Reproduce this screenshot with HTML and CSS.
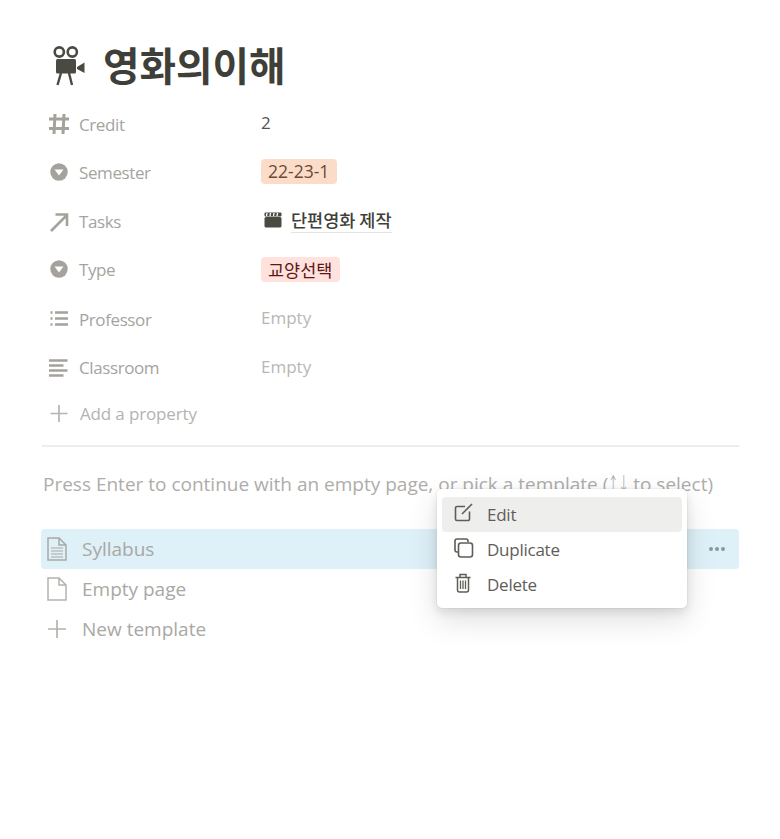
FILE: index.html
```html
<!DOCTYPE html>
<html lang="en">
<head>
    <meta charset="UTF-8">
    <meta name="viewport" content="width=device-width, initial-scale=1.0">
    <title>영화의이해</title>
    <link rel="stylesheet" href="styles.css">
</head>
<body>

<div class="page">
    <div class="title">
        <svg class="title-icon" viewBox="0 0 36 42" width="36" height="42">
            <circle cx="9.300" cy="8" r="4.600" fill="none" stroke="#4a4a43" stroke-width="2.600"/>
            <circle cx="22.300" cy="8" r="4.600" fill="none" stroke="#4a4a43" stroke-width="2.600"/>
            <rect x="6" y="15" width="20" height="14.500" rx="1.500" fill="#4a4a43"/>
            <path d="M27 23 L34.500 18.500 V29 L27 25 Z" fill="#4a4a43"/>
            <path d="M11 29 L7.500 41 M19 29 L22 41" stroke="#4a4a43" stroke-width="2.400" fill="none"/>
        </svg>
        <h1>영화의이해</h1>
    </div>

    <div class="props">
        <div class="prop">
            <div class="prop-name">
                <svg class="prop-icon" viewBox="0 0 20 20"><path d="M6 0 L5 20 M15 0 L14 20 M0 5 H20 M0 14.500 H20" stroke="#a5a29c" stroke-width="3" fill="none"/></svg>
                <span>Credit</span>
            </div>
            <div class="prop-value">2</div>
        </div>
        <div class="prop select-row">
            <div class="prop-name">
                <svg class="prop-icon" viewBox="0 0 20 20"><circle cx="10" cy="10" r="8.700" fill="#a5a29c"/><path d="M5.500 7.500 H14.500 L10 13.500 Z" fill="#fff"/></svg>
                <span>Semester</span>
            </div>
            <div class="prop-value"><span class="tag tag-orange">22-23-1</span></div>
        </div>
        <div class="prop">
            <div class="prop-name">
                <svg class="prop-icon" viewBox="0 0 20 20"><path d="M2 19 L17.500 3.500 M6.500 2.500 H18 V14" stroke="#a5a29c" stroke-width="2.600" fill="none"/></svg>
                <span>Tasks</span>
            </div>
            <div class="prop-value">
                <span class="task">
                    <svg class="task-icon" viewBox="0 0 18 16" width="18" height="16">
                        <rect x="0.500" y="5" width="17" height="10.500" rx="1.500" fill="#4a4a43"/>
                        <rect x="0.500" y="0.500" width="17" height="4" rx="1" fill="#4a4a43"/>
                        <path d="M3 1 L2.500 4 M6.500 1 L6 4 M10 1 L9.500 4 M13.500 1 L13 4" stroke="#fff" stroke-width="1.300"/>
                    </svg>
                    <span class="task-link">단편영화 제작</span>
                </span>
            </div>
        </div>
        <div class="prop select-row">
            <div class="prop-name">
                <svg class="prop-icon" viewBox="0 0 20 20"><circle cx="10" cy="10" r="8.700" fill="#a5a29c"/><path d="M5.500 7.500 H14.500 L10 13.500 Z" fill="#fff"/></svg>
                <span>Type</span>
            </div>
            <div class="prop-value"><span class="tag tag-red">교양선택</span></div>
        </div>
        <div class="prop">
            <div class="prop-name">
                <svg class="prop-icon" viewBox="0 0 20 20"><path d="M6 3.500 H19 M6 9.500 H19 M6 15.500 H19" stroke="#a5a29c" stroke-width="2.500"/><path d="M1.500 3.500 H3.500 M1.500 9.500 H3.500 M1.500 15.500 H3.500" stroke="#a5a29c" stroke-width="2.500"/></svg>
                <span>Professor</span>
            </div>
            <div class="prop-value empty">Empty</div>
        </div>
        <div class="prop">
            <div class="prop-name">
                <svg class="prop-icon" viewBox="0 0 20 20"><path d="M0 2.500 H18.500 M0 7.500 H14.500 M0 12.500 H18.500 M0 17.500 H14.500" stroke="#a5a29c" stroke-width="2.500"/></svg>
                <span>Classroom</span>
            </div>
            <div class="prop-value empty">Empty</div>
        </div>
        <div class="prop add-prop">
            <svg class="prop-icon" viewBox="0 0 20 20"><path d="M10 2 V19 M1.500 10.500 H18.500" stroke="#b5b3af" stroke-width="1.700"/></svg>
            <span>Add a property</span>
        </div>
    </div>

    <div class="divider"></div>

    <p class="hint">Press Enter to continue with an empty page, or pick a template (<span class="arrows"><span>↑↓</span></span> to select)</p>

    <div class="templates">
        <div class="template active">
            <svg class="template-icon" viewBox="0 0 20 24"><path d="M1 1 H12 L19 8 V23 H1 Z M12 1 V8 H19" stroke="#a9a8a4" stroke-width="1.500" fill="none"/><path d="M4 11 H16 M4 14 H16 M4 17 H16 M4 20 H16" stroke="#a9a8a4" stroke-width="1.200"/></svg>
            <span>Syllabus</span>
            <span class="dots"><i></i><i></i><i></i></span>
        </div>
        <div class="template">
            <svg class="template-icon" viewBox="0 0 20 24"><path d="M1 1 H12 L19 8 V23 H1 Z M12 1 V8 H19" stroke="#b5b3af" stroke-width="1.500" fill="none"/></svg>
            <span>Empty page</span>
        </div>
        <div class="template">
            <svg class="template-icon" viewBox="0 0 20 24"><path d="M10 3 V21 M1 12 H19" stroke="#b5b3af" stroke-width="1.700"/></svg>
            <span>New template</span>
        </div>
    </div>
</div>

<div class="menu">
    <div class="menu-item selected">
        <svg class="menu-icon" viewBox="0 0 20 20"><path d="M11 3.500 H3 A1.500 1.500 0 0 0 1.500 5 V16 A1.500 1.500 0 0 0 3 17.500 H14 A1.500 1.500 0 0 0 15.500 16 V8.500" stroke="#5f5d58" stroke-width="1.600" fill="none"/><path d="M8 11 L18 1" stroke="#5f5d58" stroke-width="1.600"/></svg>
        <span>Edit</span>
    </div>
    <div class="menu-item">
        <svg class="menu-icon" viewBox="0 0 20 20"><path d="M4 14 H3 A2 2 0 0 1 1 12 V3 A2 2 0 0 1 3 1 H12 A2 2 0 0 1 14 3 V4" stroke="#5f5d58" stroke-width="1.600" fill="none"/><rect x="4.500" y="5" width="14" height="14" rx="2.500" stroke="#5f5d58" stroke-width="1.600" fill="none"/></svg>
        <span>Duplicate</span>
    </div>
    <div class="menu-item">
        <svg class="menu-icon" viewBox="0 0 20 20"><path d="M1.500 4.500 H16.500 M6 4 V1.500 H12 V4 M3.500 5 V17 A2 2 0 0 0 5.500 19 H12.500 A2 2 0 0 0 14.500 17 V5" stroke="#5f5d58" stroke-width="1.500" fill="none"/><path d="M6.500 7.500 V16 M9 7.500 V16 M11.500 7.500 V16" stroke="#5f5d58" stroke-width="1.300"/></svg>
        <span>Delete</span>
    </div>
</div>

</body>
</html>
```

FILE: styles.css
```css
/* Basic page setup */
body {
    margin: 0;
    background: #fff;
    font-family: "Open Sans", "Noto Sans CJK KR", sans-serif;
}

.page {
    padding: 27px 41px 0 41px;
}

/* Title */
.title {
    display: flex;
    align-items: center;
    height: 73px;
    padding-left: 9px;
}

.title-icon {
    flex: none;
    margin-top: 2px;
    margin-right: 17px;
}

.title h1 {
    margin: 0;
    font-family: "Noto Sans CJK KR", sans-serif;
    font-size: 39.7px;
    font-weight: 700;
    color: #3f3f3a;
}

/* Properties */
.prop {
    display: flex;
    align-items: center;
    height: 48.7px;
    font-size: 17px;
}

.prop-name {
    display: flex;
    align-items: center;
    width: 220px;
    color: #a5a4a0;
    letter-spacing: -0.4px;
}

.select-row .prop-name {
    margin-top: -2px;
}

.prop-icon {
    flex: none;
    width: 20px;
    height: 20px;
    margin: 0 10px 0 8px;
}

.prop-value {
    color: #55534e;
    margin-top: -3px;
}

.empty {
    color: #b8b7b4;
}

.tag {
    display: inline-block;
    padding: 0 8px 0 7px;
    height: 25px;
    line-height: 25px;
    border-radius: 4px;
    font-size: 17.5px;
}

.tag-orange {
    background: #fbdcc8;
    color: #6b4a37;
}

.tag-red {
    background: #ffe2dd;
    color: #5d1715;
    font-family: "Noto Sans CJK KR", sans-serif;
    position: relative;
    top: 1px;
}

.task {
    display: flex;
    align-items: center;
    padding-left: 3px;
}

.task-icon {
    margin-right: 9px;
}

.task-link {
    font-family: "Noto Sans CJK KR", sans-serif;
    font-size: 17.5px;
    font-weight: 500;
    color: #3f3f3a;
    border-bottom: 1px solid #e4e3e1;
}

.add-prop {
    box-sizing: border-box;
    padding-bottom: 6px;
    color: #b4b3b0;
    letter-spacing: -0.15px;
}

.add-prop .prop-icon {
    margin-right: 11px;
}

.divider {
    height: 2px;
    margin: 4px 0 0 1px;
    background: #ededec;
}

.hint {
    margin: 18px 0 26px 2px;
    height: 38px;
    line-height: 38px;
    font-size: 19px;
    color: #aeadaa;
    white-space: nowrap;
}

/* the arrow glyphs come out too wide, squeeze them */
.arrows {
    display: inline-block;
    width: 20px;
}

.arrows span {
    display: inline-block;
    transform: scaleX(0.55);
    transform-origin: left center;
}

/* Template list */
.template {
    display: flex;
    align-items: center;
    height: 40px;
    padding-left: 6px;
    border-radius: 4px;
    font-size: 19px;
    color: #a9a8a4;
}

.template.active {
    background: #def0f8;
}

.template-icon {
    flex: none;
    width: 20px;
    height: 24px;
    margin-right: 15px;
}

.dots {
    display: flex;
    gap: 2px;
    margin-left: auto;
    margin-right: 14px;
}

.dots i {
    width: 4px;
    height: 4px;
    border-radius: 50%;
    background: #8f9699;
}

/* Context menu lies over the list */
.menu {
    position: absolute;
    left: 437px;
    top: 489px;
    width: 250px;
    box-sizing: border-box;
    padding: 8px 5px 6px;
    background: #fff;
    border-radius: 5px;
    box-shadow: 0 0 0 1px rgba(15, 15, 15, 0.03), 0 4px 10px rgba(15, 15, 15, 0.1), 0 12px 30px rgba(15, 15, 15, 0.13);
    font-size: 17px;
    letter-spacing: -0.25px;
    color: #5f5d58;
}

.menu-item {
    display: flex;
    align-items: center;
    height: 35px;
    border-radius: 4px;
}

.menu-item.selected {
    background: #eeeeed;
}

.menu-icon {
    flex: none;
    width: 20px;
    height: 20px;
    margin: -3px 13px 0 12px;
}
```
